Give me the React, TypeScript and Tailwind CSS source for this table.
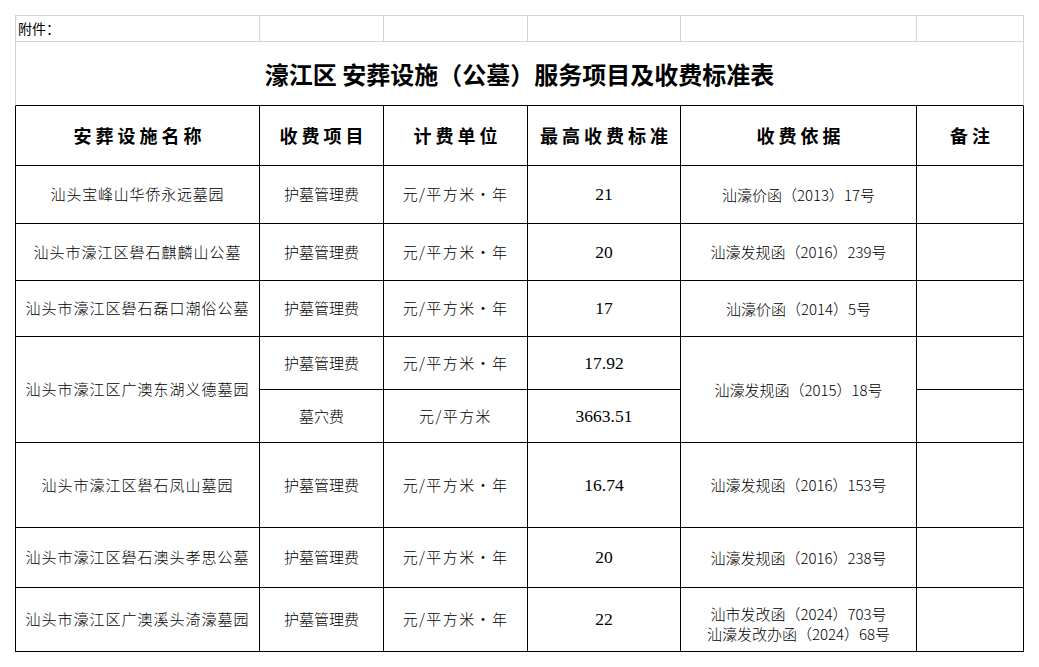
import type { ReactNode } from "react";

type FeeRow = {
  name: string;
  nameTrack?: string;
  price: string;
  basis: string[];
};

const TOP_ROWS: FeeRow[] = [
  { name: "汕头宝峰山华侨永远墓园", nameTrack: "tracking-[0.8px]", price: "21", basis: ["汕濠价函（2013）17号"] },
  { name: "汕头市濠江区礐石麒麟山公墓", price: "20", basis: ["汕濠发规函（2016）239号"] },
  { name: "汕头市濠江区礐石磊口潮俗公墓", price: "17", basis: ["汕濠价函（2014）5号"] },
];

const BOTTOM_ROWS: FeeRow[] = [
  { name: "汕头市濠江区礐石凤山墓园", price: "16.74", basis: ["汕濠发规函（2016）153号"] },
  { name: "汕头市濠江区礐石澳头孝思公墓", price: "20", basis: ["汕濠发规函（2016）238号"] },
  {
    name: "汕头市濠江区广澳溪头渏濠墓园",
    price: "22",
    basis: ["汕市发改函（2024）703号", "汕濠发改办函（2024）68号"],
  },
];

const HEADERS = ["安葬设施名称", "收费项目", "计费单位", "最高收费标准", "收费依据", "备注"];

function Cell({ first, className = "", children }: { first?: boolean; className?: string; children?: ReactNode }) {
  return (
    <div
      className={`flex items-center justify-center border-r border-b border-black text-center ${first ? "border-l" : ""} ${className}`}
    >
      {children}
    </div>
  );
}

const nameCls = "text-[15px] font-light";
const itemCls = "text-[15px] font-light";
const unitCls = "text-[15px] font-light tracking-[1.4px]";
const priceCls = "font-['Liberation_Serif',serif] text-[17.5px]";
const basisCls = "text-[15px] font-light leading-[20px]";

function FeeLine({ row, tall }: { row: FeeRow; tall?: boolean }) {
  return (
    <>
      <Cell first className={`${nameCls} ${row.nameTrack ?? "tracking-[1px]"}`}>{row.name}</Cell>
      <Cell className={itemCls}>护墓管理费</Cell>
      <Cell className={unitCls}>元/平方米・年</Cell>
      <Cell className={priceCls}>{row.price}</Cell>
      <Cell className={`${basisCls} flex-col ${tall ? "pt-[9px]" : ""}`}>
        {row.basis.map((b) => (
          <div key={b}>{b}</div>
        ))}
      </Cell>
      <Cell />
    </>
  );
}

export default function App() {
  return (
    <div className="min-h-screen bg-white pl-[15px] pt-[15px] font-['Noto_Sans_CJK_SC',sans-serif] text-black">
      <div className="grid w-[1009px] grid-cols-[245px_124px_144px_153px_236px_107px] grid-rows-[27px_64px_60px_58px_57px_56px_53px_53px_85px_60px_64px]">
        {/* sheet header rows, grey grid */}
        <div className="flex items-center border border-[#d4d4d4] pl-[2px] text-[14px]">附件：</div>
        {[0, 1, 2, 3, 4].map((i) => (
          <div key={i} className="border-y border-r border-[#d4d4d4]" />
        ))}
        <div className="col-span-6 flex items-center justify-center border-x border-b border-x-[#d4d4d4] border-b-black text-[24px] font-bold">
          濠江区 安葬设施（公墓）服务项目及收费标准表
        </div>

        {HEADERS.map((h, i) => (
          <Cell key={h} first={i === 0} className="pl-[4px] text-[18px] font-semibold tracking-[4px]">
            {h}
          </Cell>
        ))}

        {TOP_ROWS.map((r) => (
          <FeeLine key={r.name} row={r} />
        ))}

        {/* 东湖义德墓园 has two fee items */}
        <Cell first className={`row-span-2 ${nameCls} tracking-[1px]`}>汕头市濠江区广澳东湖义德墓园</Cell>
        <Cell className={itemCls}>护墓管理费</Cell>
        <Cell className={unitCls}>元/平方米・年</Cell>
        <Cell className={priceCls}>17.92</Cell>
        <Cell className={`row-span-2 ${basisCls}`}>汕濠发规函（2015）18号</Cell>
        <Cell />
        <Cell className={itemCls}>墓穴费</Cell>
        <Cell className={`${unitCls} tracking-[0.9px]`}>元/平方米</Cell>
        <Cell className={priceCls}>3663.51</Cell>
        <Cell />

        {BOTTOM_ROWS.map((r) => (
          <FeeLine key={r.name} row={r} tall={r.basis.length > 1} />
        ))}
      </div>
    </div>
  );
}
